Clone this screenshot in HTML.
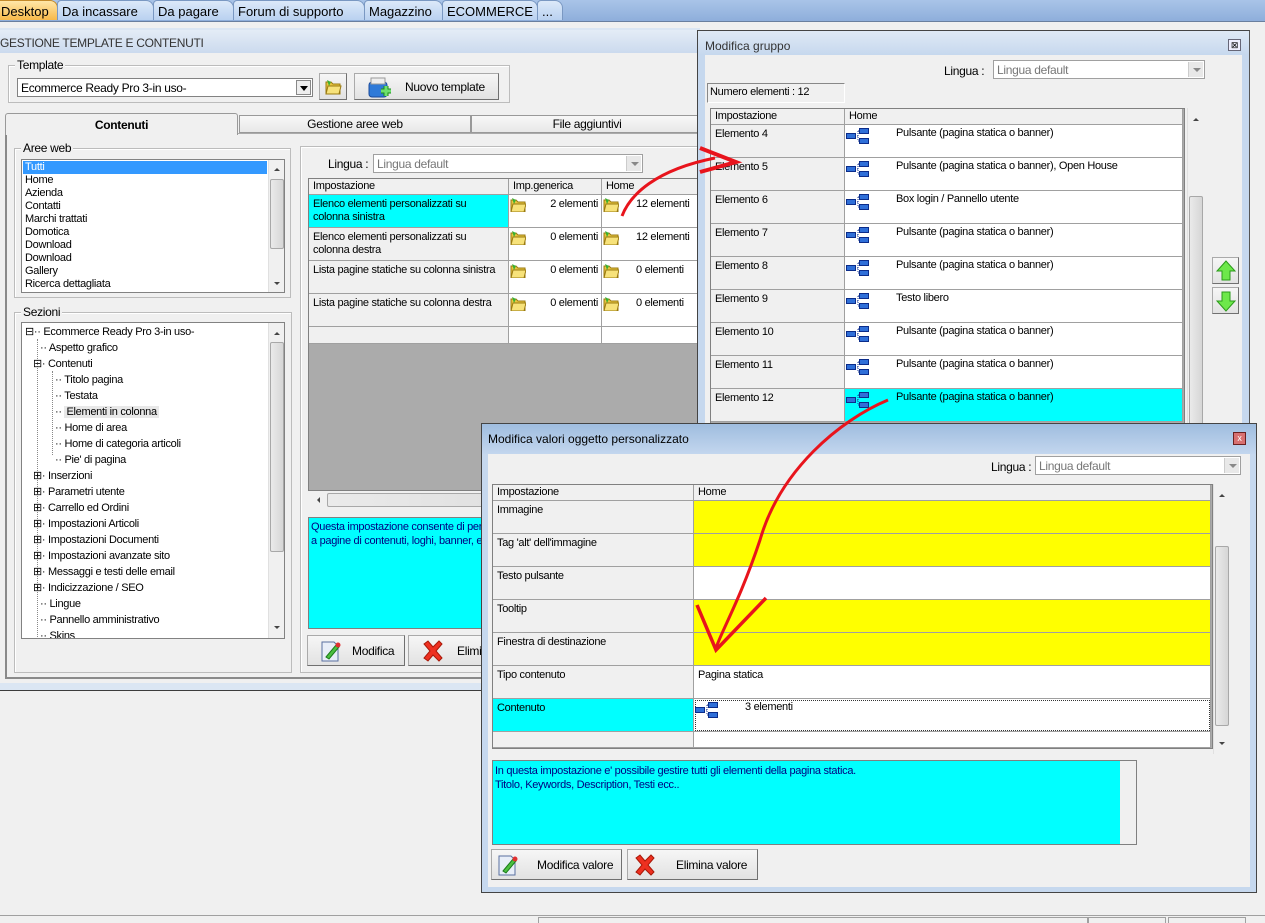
<!DOCTYPE html>
<html><head><meta charset="utf-8">
<style>
*{box-sizing:border-box;margin:0;padding:0}
body{width:1265px;height:923px;overflow:hidden;background:#f0f0f0;font-family:"Liberation Sans",sans-serif;font-size:11px;letter-spacing:-0.3px;color:#000;position:relative}
.a{position:absolute}
.tb{position:absolute;top:0;height:20px;font-size:13px;letter-spacing:0;line-height:21px;padding-left:4px;background:linear-gradient(#dce9f9,#b9d1f0);border:1px solid #7a98c2;border-bottom:none;border-radius:4px 8px 0 0;white-space:nowrap;overflow:hidden}
.grp{position:absolute;border:1px solid #bcbcbc;box-shadow:inset 1px 1px 0 #fff}
.lg{position:absolute;top:-8px;left:6px;background:#f0f0f0;padding:0 2px}
.white{position:absolute;background:#fff;border:1px solid #828282;border-right-color:#fff;border-bottom-color:#fff}
.btn{position:absolute;background:linear-gradient(#f6f6f6,#e2e2e2);border:1px solid #aaa;border-right-color:#707070;border-bottom-color:#707070;font-size:12px}
.c{position:absolute;border-right:1px solid #a0a0a0;border-bottom:1px solid #a0a0a0;padding:3px 0 0 4px;line-height:13px;overflow:hidden;white-space:nowrap}
.g{background:#f0f0f0}.w{background:#fff}.cy{background:#00ffff}.y{background:#ffff00}
.sb{position:absolute;background:#f0f0f0;border-left:1px solid #e0e0e0}
.thumb{position:absolute;background:linear-gradient(90deg,#eaeaea,#d6d6d6);border:1px solid #a8a8a8;border-radius:2px}
.combo{position:absolute;background:#fff;border:1px solid #a0a0a0;color:#777;padding:2px 0 0 3px;font-size:12px}
.dd{position:absolute;right:1px;top:1px;bottom:1px;width:15px;background:#e8e8e8;border-left:1px solid #ccc}
.dd:after{content:"";position:absolute;left:4px;top:6px;border:4px solid transparent;border-top:4px solid #888}
.li{position:absolute;left:3px;height:13px;line-height:13px;font-size:11px;white-space:nowrap}
.dlg{position:absolute;background:#c6d8ee;border:1px solid #444}
</style></head><body>
<svg width="0" height="0" style="position:absolute">
<defs>
<g id="tr"><path d="M9 9h3M12 4v10M12 4h2M12 14h2" stroke="#1a3a9a" stroke-width="1" fill="none" stroke-dasharray="1 1"/><rect x="0.5" y="6.5" width="9" height="5" fill="#2f6fd8" stroke="#0b2c8a"/><rect x="13.5" y="1.5" width="9" height="5" fill="#2f6fd8" stroke="#0b2c8a"/><rect x="13.5" y="11.5" width="9" height="5" fill="#2f6fd8" stroke="#0b2c8a"/></g>
<g id="fd"><path d="M1 4h5l2 2h7v10H1z" fill="#e8c640" stroke="#9a7a10"/><path d="M3 8h13l-2 8H1z" fill="#f7e27a" stroke="#9a7a10"/><path d="M2 2l4 2-2 4z" fill="#3ab030"/></g>
</defs></svg>

<!-- top tab bar -->
<div class="a" style="left:0;top:0;width:1265px;height:21px;background:linear-gradient(#a9c4e8,#8eaedb)"></div>
<div class="tb" style="left:-4px;width:62px;background:linear-gradient(#ffe6a8,#f7b94a);border-color:#c48a2a">Desktop</div>
<div class="tb" style="left:57px;width:97px">Da incassare</div>
<div class="tb" style="left:153px;width:81px">Da pagare</div>
<div class="tb" style="left:233px;width:132px">Forum di supporto</div>
<div class="tb" style="left:364px;width:79px">Magazzino</div>
<div class="tb" style="left:442px;width:96px">ECOMMERCE</div>
<div class="tb" style="left:537px;width:26px">...</div>
<div class="a" style="left:0;top:21px;width:1265px;height:6px;background:#f0f0f0;border-top:1px solid #6a7f9e"></div>

<!-- main window -->
<div class="a" style="left:0;top:28px;width:700px;height:663px;background:#dbe6f3;border-bottom:1px solid #3c3c3c"></div>
<div class="a" style="left:0;top:30px;width:700px;height:23px;background:linear-gradient(#e4ecf6,#cbdaee);font-size:12px;line-height:27px;color:#333">GESTIONE TEMPLATE E CONTENUTI</div>
<div class="a" style="left:0;top:53px;width:700px;height:630px;background:#f0f0f0"></div>
<div class="a" style="left:5px;top:133px;width:700px;height:546px;border:1px solid #888;border-top-color:#aaa;border-bottom:2px solid #8a8a8a;border-left:2px solid #8a8a8a"></div>

<div class="grp" style="left:8px;top:65px;width:502px;height:38px"><span class="lg" style="font-size:12px">Template</span></div>
<div class="white" style="left:17px;top:78px;width:296px;height:19px;border-color:#828282;font-size:12px;padding:2px 3px">Ecommerce Ready Pro 3-in uso-<div class="a" style="right:1px;top:1px;width:15px;height:15px;background:#eee;border:1px solid #888"><div class="a" style="left:3px;top:5px;border:4px solid transparent;border-top:5px solid #000"></div></div></div>
<div class="btn" style="left:319px;top:73px;width:28px;height:27px"><svg class="a" style="left:5px;top:4px" width="18" height="18"><use href="#fd"/></svg></div>
<div class="btn" style="left:354px;top:73px;width:145px;height:27px;line-height:26px;padding-left:50px">Nuovo template
<svg class="a" style="left:12px;top:2px" width="26" height="24"><rect x="2" y="6" width="18" height="15" rx="3" fill="#2f7ad8" stroke="#1b4a9a"/><rect x="4" y="2" width="14" height="6" fill="#eee" stroke="#999"/><path d="M14 15h10M19 10v10" stroke="#1c8a1c" stroke-width="5"/><path d="M14 15h10M19 10v10" stroke="#6ee06e" stroke-width="3"/></svg></div>

<!-- tabs -->
<div class="a" style="left:5px;top:113px;width:233px;height:22px;background:#f0f0f0;border:1px solid #999;border-bottom:none;font-weight:bold;font-size:12px;text-align:center;line-height:22px;border-radius:3px 3px 0 0">Contenuti</div>
<div class="a" style="left:239px;top:115px;width:232px;height:18px;background:linear-gradient(#f8f8f8,#e8e8e8);border:1px solid #999;font-size:12px;text-align:center;line-height:16px">Gestione aree web</div>
<div class="a" style="left:471px;top:115px;width:232px;height:18px;background:linear-gradient(#f8f8f8,#e8e8e8);border:1px solid #999;font-size:12px;text-align:center;line-height:16px">File aggiuntivi</div>

<!-- Aree web -->
<div class="grp" style="left:14px;top:148px;width:277px;height:150px"><span class="lg" style="font-size:12px">Aree web</span></div>
<div class="white" style="left:21px;top:159px;width:264px;height:134px;border:1px solid #828282;overflow:hidden;font-size:11px">
<div class="a" style="left:1px;top:1px;width:244px;height:13px;background:#3399ff;color:#fff;padding-left:2px;line-height:13px">Tutti</div>
<div class="li" style="top:14px">Home</div><div class="li" style="top:27px">Azienda</div><div class="li" style="top:40px">Contatti</div><div class="li" style="top:53px">Marchi trattati</div><div class="li" style="top:66px">Domotica</div><div class="li" style="top:79px">Download</div><div class="li" style="top:92px">Download</div><div class="li" style="top:105px">Gallery</div><div class="li" style="top:118px">Ricerca dettagliata</div>
<div class="sb" style="left:246px;top:0;width:17px;height:132px"><div class="thumb" style="left:1px;top:19px;width:14px;height:70px"></div><div class="a" style="left:5px;top:5px;border:3px solid transparent;border-bottom:3px solid #444"></div><div class="a" style="left:5px;top:122px;border:3px solid transparent;border-top:3px solid #444"></div></div>
</div>

<!-- Sezioni -->
<div class="grp" style="left:14px;top:312px;width:278px;height:361px"><span class="lg" style="font-size:12px">Sezioni</span></div>
<div class="white" style="left:21px;top:322px;width:264px;height:317px;border:1px solid #828282;overflow:hidden;font-size:11px">
<div class="a" style="left:15px;top:16px;height:300px;border-left:1px dotted #888"></div>
<div class="a" style="left:30px;top:48px;height:84px;border-left:1px dotted #888"></div>
<div class="li" style="top:3px;left:3px">⊟·· Ecommerce Ready Pro 3-in uso-</div>
<div class="li" style="top:19px;left:18px">·· Aspetto grafico</div>
<div class="li" style="top:35px;left:11px">⊟· Contenuti</div>
<div class="li" style="top:51px;left:33px">·· Titolo pagina</div>
<div class="li" style="top:67px;left:33px">·· Testata</div>
<div class="li" style="top:83px;left:33px">·· <span style="background:#e8e8e8;padding:0 2px">Elementi in colonna</span></div>
<div class="li" style="top:99px;left:33px">·· Home di area</div>
<div class="li" style="top:115px;left:33px">·· Home di categoria articoli</div>
<div class="li" style="top:131px;left:33px">·· Pie' di pagina</div>
<div class="li" style="top:147px;left:11px">⊞· Inserzioni</div>
<div class="li" style="top:163px;left:11px">⊞· Parametri utente</div>
<div class="li" style="top:179px;left:11px">⊞· Carrello ed Ordini</div>
<div class="li" style="top:195px;left:11px">⊞· Impostazioni Articoli</div>
<div class="li" style="top:211px;left:11px">⊞· Impostazioni Documenti</div>
<div class="li" style="top:227px;left:11px">⊞· Impostazioni avanzate sito</div>
<div class="li" style="top:243px;left:11px">⊞· Messaggi e testi delle email</div>
<div class="li" style="top:259px;left:11px">⊞· Indicizzazione / SEO</div>
<div class="li" style="top:275px;left:18px">·· Lingue</div>
<div class="li" style="top:291px;left:18px">·· Pannello amministrativo</div>
<div class="li" style="top:307px;left:18px">·· Skins</div>
<div class="sb" style="left:246px;top:0;width:17px;height:316px"><div class="thumb" style="left:1px;top:19px;width:14px;height:210px"></div><div class="a" style="left:5px;top:6px;border:3px solid transparent;border-bottom:3px solid #444"></div><div class="a" style="left:5px;top:303px;border:3px solid transparent;border-top:3px solid #444"></div></div>
</div>

<!-- Right panel of main -->
<div class="grp" style="left:300px;top:146px;width:410px;height:527px"></div>
<div class="a" style="left:328px;top:157px;font-size:12px">Lingua :</div>
<div class="combo" style="left:373px;top:154px;width:270px;height:19px">Lingua default<div class="dd"></div></div>
<div class="a" style="left:308px;top:178px;width:400px;height:313px;background:#ababab;border:1px solid #808080"></div>
<div class="c g" style="left:309px;top:179px;width:200px;height:16px;padding-top:1px">Impostazione</div>
<div class="c g" style="left:509px;top:179px;width:93px;height:16px;padding-top:1px">Imp.generica</div>
<div class="c g" style="left:602px;top:179px;width:100px;height:16px;padding-top:1px">Home</div>

<div class="c cy" style="left:309px;top:195px;width:200px;height:33px">Elenco elementi personalizzati su<br>colonna sinistra</div>
<div class="c w" style="left:509px;top:195px;width:93px;height:33px"><svg class="a" style="left:1px;top:1px" width="16" height="16"><use href="#fd"/></svg><span class="a" style="right:3px;top:3px">2 elementi</span></div>
<div class="c w" style="left:602px;top:195px;width:100px;height:33px"><svg class="a" style="left:1px;top:1px" width="16" height="16"><use href="#fd"/></svg><span class="a" style="left:34px;top:3px">12 elementi</span></div>

<div class="c g" style="left:309px;top:228px;width:200px;height:33px">Elenco elementi personalizzati su<br>colonna destra</div>
<div class="c w" style="left:509px;top:228px;width:93px;height:33px"><svg class="a" style="left:1px;top:1px" width="16" height="16"><use href="#fd"/></svg><span class="a" style="right:3px;top:3px">0 elementi</span></div>
<div class="c w" style="left:602px;top:228px;width:100px;height:33px"><svg class="a" style="left:1px;top:1px" width="16" height="16"><use href="#fd"/></svg><span class="a" style="left:34px;top:3px">12 elementi</span></div>

<div class="c g" style="left:309px;top:261px;width:200px;height:33px">Lista pagine statiche su colonna sinistra</div>
<div class="c w" style="left:509px;top:261px;width:93px;height:33px"><svg class="a" style="left:1px;top:1px" width="16" height="16"><use href="#fd"/></svg><span class="a" style="right:3px;top:3px">0 elementi</span></div>
<div class="c w" style="left:602px;top:261px;width:100px;height:33px"><svg class="a" style="left:1px;top:1px" width="16" height="16"><use href="#fd"/></svg><span class="a" style="left:34px;top:3px">0 elementi</span></div>

<div class="c g" style="left:309px;top:294px;width:200px;height:33px">Lista pagine statiche su colonna destra</div>
<div class="c w" style="left:509px;top:294px;width:93px;height:33px"><svg class="a" style="left:1px;top:1px" width="16" height="16"><use href="#fd"/></svg><span class="a" style="right:3px;top:3px">0 elementi</span></div>
<div class="c w" style="left:602px;top:294px;width:100px;height:33px"><svg class="a" style="left:1px;top:1px" width="16" height="16"><use href="#fd"/></svg><span class="a" style="left:34px;top:3px">0 elementi</span></div>

<div class="c g" style="left:309px;top:327px;width:200px;height:17px"></div>
<div class="c w" style="left:509px;top:327px;width:93px;height:17px"></div>
<div class="c w" style="left:602px;top:327px;width:100px;height:17px"></div>
<div class="a" style="left:309px;top:492px;width:395px;height:17px;background:#f0f0f0"><div class="thumb" style="left:18px;top:1px;width:350px;height:14px"></div><div class="a" style="left:5px;top:5px;border:3px solid transparent;border-right:3px solid #444"></div></div>

<div class="a" style="left:308px;top:517px;width:395px;height:112px;background:#00ffff;border:1px solid #808080;color:#000080;padding:2px 2px;line-height:14px;font-size:11px">Questa impostazione consente di personalizzare<br>a pagine di contenuti, loghi, banner, ecc.</div>
<div class="btn" style="left:307px;top:635px;width:98px;height:31px;line-height:30px;padding-left:44px">Modifica
<svg class="a" style="left:12px;top:3px" width="22" height="24"><path d="M2 3h12l4 4v15H2z" fill="#e8eef8" stroke="#5a70a0"/><path d="M6 18l10-12 3 2-10 12z" fill="#4cc040" stroke="#1c7a1c"/><circle cx="18" cy="6" r="2.5" fill="#e03030"/></svg></div>
<div class="btn" style="left:408px;top:635px;width:100px;height:31px;line-height:30px;padding-left:48px">Elimina
<svg class="a" style="left:12px;top:3px" width="24" height="24"><path d="M3 5l4-3 5 6 6-6 3 3-6 7 6 7-3 3-6-6-5 6-4-3 6-7z" fill="#ee3020" stroke="#a81808"/></svg></div>

<!-- Modifica gruppo dialog -->
<div class="dlg" style="left:697px;top:30px;width:553px;height:400px;border-right:1px solid #555"></div>
<div class="a" style="left:698px;top:31px;width:551px;height:24px;background:linear-gradient(#dfe9f5,#c6d8ee);font-size:12px;line-height:30px;padding-left:7px;color:#333;letter-spacing:0">Modifica gruppo</div>
<div class="a" style="left:1228px;top:39px;width:13px;height:12px;border:1px solid #667;background:#eef;font-size:9px;line-height:10px;text-align:center">⊠</div>
<div class="a" style="left:705px;top:55px;width:537px;height:380px;background:#f0f0f0"></div>
<div class="a" style="left:944px;top:64px;font-size:12px">Lingua :</div>
<div class="combo" style="left:993px;top:60px;width:212px;height:19px">Lingua default<div class="dd"></div></div>
<div class="a" style="left:707px;top:83px;width:138px;height:20px;border:1px solid #888;border-right-color:#fff;border-bottom-color:#fff;padding:2px;font-size:11px">Numero elementi : 12</div>
<div class="a" style="left:710px;top:108px;width:475px;height:320px;background:#ababab;border:1px solid #808080"></div>
<div class="c g" style="left:711px;top:109px;width:134px;height:16px;padding-top:1px">Impostazione</div>
<div class="c g" style="left:845px;top:109px;width:338px;height:16px;padding-top:1px">Home</div>

<div class="c g" style="left:711px;top:125px;width:134px;height:33px">Elemento 4</div>
<div class="c w" style="left:845px;top:125px;width:338px;height:33px"><svg class="a" style="left:1px;top:2px" width="24" height="18"><use href="#tr"/></svg><span class="a" style="left:51px;top:2px">Pulsante (pagina statica o banner)</span></div>
<div class="c g" style="left:711px;top:158px;width:134px;height:33px">Elemento 5</div>
<div class="c w" style="left:845px;top:158px;width:338px;height:33px"><svg class="a" style="left:1px;top:2px" width="24" height="18"><use href="#tr"/></svg><span class="a" style="left:51px;top:2px">Pulsante (pagina statica o banner), Open House</span></div>
<div class="c g" style="left:711px;top:191px;width:134px;height:33px">Elemento 6</div>
<div class="c w" style="left:845px;top:191px;width:338px;height:33px"><svg class="a" style="left:1px;top:2px" width="24" height="18"><use href="#tr"/></svg><span class="a" style="left:51px;top:2px">Box login / Pannello utente</span></div>
<div class="c g" style="left:711px;top:224px;width:134px;height:33px">Elemento 7</div>
<div class="c w" style="left:845px;top:224px;width:338px;height:33px"><svg class="a" style="left:1px;top:2px" width="24" height="18"><use href="#tr"/></svg><span class="a" style="left:51px;top:2px">Pulsante (pagina statica o banner)</span></div>
<div class="c g" style="left:711px;top:257px;width:134px;height:33px">Elemento 8</div>
<div class="c w" style="left:845px;top:257px;width:338px;height:33px"><svg class="a" style="left:1px;top:2px" width="24" height="18"><use href="#tr"/></svg><span class="a" style="left:51px;top:2px">Pulsante (pagina statica o banner)</span></div>
<div class="c g" style="left:711px;top:290px;width:134px;height:33px">Elemento 9</div>
<div class="c w" style="left:845px;top:290px;width:338px;height:33px"><svg class="a" style="left:1px;top:2px" width="24" height="18"><use href="#tr"/></svg><span class="a" style="left:51px;top:2px">Testo libero</span></div>
<div class="c g" style="left:711px;top:323px;width:134px;height:33px">Elemento 10</div>
<div class="c w" style="left:845px;top:323px;width:338px;height:33px"><svg class="a" style="left:1px;top:2px" width="24" height="18"><use href="#tr"/></svg><span class="a" style="left:51px;top:2px">Pulsante (pagina statica o banner)</span></div>
<div class="c g" style="left:711px;top:356px;width:134px;height:33px">Elemento 11</div>
<div class="c w" style="left:845px;top:356px;width:338px;height:33px"><svg class="a" style="left:1px;top:2px" width="24" height="18"><use href="#tr"/></svg><span class="a" style="left:51px;top:2px">Pulsante (pagina statica o banner)</span></div>
<div class="c g" style="left:711px;top:389px;width:134px;height:33px">Elemento 12</div>
<div class="c cy" style="left:845px;top:389px;width:338px;height:33px"><svg class="a" style="left:1px;top:2px" width="24" height="18"><use href="#tr"/></svg><span class="a" style="left:51px;top:2px">Pulsante (pagina statica o banner)</span></div>
<div class="sb" style="left:1187px;top:108px;width:17px;height:320px"><div class="thumb" style="left:1px;top:88px;width:14px;height:240px"></div><div class="a" style="left:5px;top:7px;border:3px solid transparent;border-bottom:3px solid #444"></div></div>
<div class="btn" style="left:1212px;top:257px;width:27px;height:27px"><svg class="a" style="left:3px;top:2px" width="20" height="22"><path d="M10 1L1 11h5v9h8v-9h5z" fill="#6de84a" stroke="#2a9a1a"/></svg></div>
<div class="btn" style="left:1212px;top:287px;width:27px;height:27px"><svg class="a" style="left:3px;top:2px" width="20" height="22"><path d="M10 21L1 11h5V2h8v9h5z" fill="#6de84a" stroke="#2a9a1a"/></svg></div>

<!-- Modifica valori dialog -->
<div class="dlg" style="left:481px;top:423px;width:776px;height:470px"></div>
<div class="a" style="left:482px;top:424px;width:774px;height:30px;background:linear-gradient(#9fbddf,#c3d6ee);font-size:12px;line-height:30px;padding-left:6px;letter-spacing:0">Modifica valori oggetto personalizzato</div>
<div class="a" style="left:1233px;top:432px;width:13px;height:13px;border:1px solid #6a2020;background:#d87070;color:#fff;font-size:9px;line-height:11px;text-align:center">x</div>
<div class="a" style="left:488px;top:454px;width:762px;height:433px;background:#f0f0f0"></div>
<div class="a" style="left:991px;top:460px;font-size:12px">Lingua :</div>
<div class="combo" style="left:1035px;top:456px;width:206px;height:19px">Lingua default<div class="dd"></div></div>
<div class="a" style="left:492px;top:484px;width:721px;height:265px;background:#ababab;border:1px solid #808080"></div>
<div class="c g" style="left:493px;top:485px;width:201px;height:16px;padding-top:1px">Impostazione</div>
<div class="c g" style="left:694px;top:485px;width:517px;height:16px;padding-top:1px">Home</div>
<div class="c g" style="left:493px;top:501px;width:201px;height:33px">Immagine</div><div class="c y" style="left:694px;top:501px;width:517px;height:33px"></div>
<div class="c g" style="left:493px;top:534px;width:201px;height:33px">Tag 'alt' dell'immagine</div><div class="c y" style="left:694px;top:534px;width:517px;height:33px"></div>
<div class="c g" style="left:493px;top:567px;width:201px;height:33px">Testo pulsante</div><div class="c w" style="left:694px;top:567px;width:517px;height:33px"></div>
<div class="c g" style="left:493px;top:600px;width:201px;height:33px">Tooltip</div><div class="c y" style="left:694px;top:600px;width:517px;height:33px"></div>
<div class="c g" style="left:493px;top:633px;width:201px;height:33px">Finestra di destinazione</div><div class="c y" style="left:694px;top:633px;width:517px;height:33px"></div>
<div class="c g" style="left:493px;top:666px;width:201px;height:33px">Tipo contenuto</div><div class="c w" style="left:694px;top:666px;width:517px;height:33px">Pagina statica</div>
<div class="c cy" style="left:493px;top:699px;width:201px;height:33px">Contenuto</div><div class="c w" style="left:694px;top:699px;width:517px;height:33px;outline:1px dotted #333;outline-offset:-2px"><svg class="a" style="left:1px;top:2px" width="24" height="18"><use href="#tr"/></svg><span class="a" style="left:51px;top:2px">3 elementi</span></div>
<div class="c g" style="left:493px;top:732px;width:201px;height:16px"></div><div class="c w" style="left:694px;top:732px;width:517px;height:16px"></div>
<div class="sb" style="left:1213px;top:484px;width:17px;height:270px"><div class="thumb" style="left:1px;top:62px;width:14px;height:180px"></div><div class="a" style="left:5px;top:7px;border:3px solid transparent;border-bottom:3px solid #444"></div><div class="a" style="left:5px;top:258px;border:3px solid transparent;border-top:3px solid #444"></div></div>

<div class="a" style="left:492px;top:760px;width:645px;height:85px;background:#00ffff;border:1px solid #808080;padding:3px 2px;line-height:14px;color:#000080">In questa impostazione e' possibile gestire tutti gli elementi della pagina statica.<br>Titolo, Keywords, Description, Testi ecc..</div>
<div class="a" style="left:1120px;top:761px;width:16px;height:83px;background:#f0f0f0"></div>
<div class="btn" style="left:491px;top:849px;width:131px;height:31px;line-height:30px;padding-left:45px">Modifica valore
<svg class="a" style="left:5px;top:3px" width="22" height="24"><path d="M2 3h12l4 4v15H2z" fill="#e8eef8" stroke="#5a70a0"/><path d="M6 18l10-12 3 2-10 12z" fill="#4cc040" stroke="#1c7a1c"/><circle cx="18" cy="6" r="2.5" fill="#e03030"/></svg></div>
<div class="btn" style="left:627px;top:849px;width:131px;height:31px;line-height:30px;padding-left:48px">Elimina valore
<svg class="a" style="left:5px;top:3px" width="24" height="24"><path d="M3 5l4-3 5 6 6-6 3 3-6 7 6 7-3 3-6-6-5 6-4-3 6-7z" fill="#ee3020" stroke="#a81808"/></svg></div>

<!-- status bar -->
<div class="a" style="left:0;top:915px;width:1265px;height:8px;border-top:1px solid #a0a0a0;background:#f0f0f0"></div>
<div class="a" style="left:538px;top:917px;width:550px;height:6px;border:1px solid #a0a0a0;border-bottom:none"></div>
<div class="a" style="left:1088px;top:917px;width:78px;height:6px;border:1px solid #a0a0a0;border-bottom:none"></div>
<div class="a" style="left:1168px;top:917px;width:78px;height:6px;border:1px solid #a0a0a0;border-bottom:none"></div>

<!-- red arrows -->
<svg class="a" style="left:0;top:0" width="1265" height="923">
<path d="M622 216 C630 195,655 170,715 158" stroke="#e8141c" stroke-width="3" fill="none"/>
<path d="M700 148 L736 162 L700 172" stroke="#e8141c" stroke-width="4" fill="none"/>
<path d="M888 400 C840 420,780 470,760 540 C740 600,722 630,716 648" stroke="#e8141c" stroke-width="3" fill="none"/>
<path d="M697 605 L716 650 L766 598" stroke="#e8141c" stroke-width="3.5" fill="none"/>
</svg>
</body></html>
